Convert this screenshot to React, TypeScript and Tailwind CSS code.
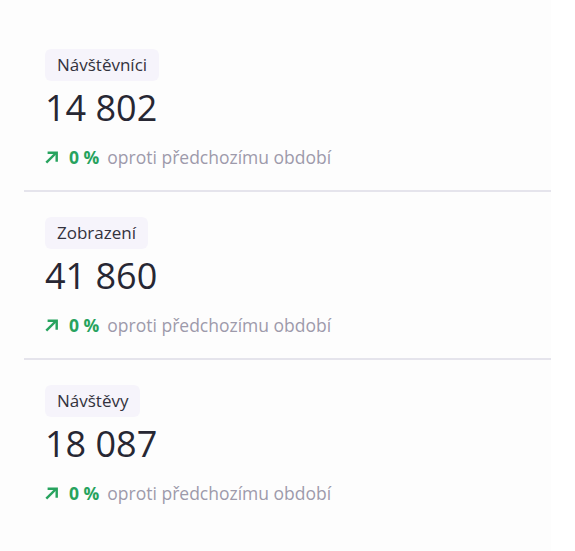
import type { ReactElement } from "react";

interface Stat {
  label: string;
  value: string;
  change: string;
}

const STATS: Stat[] = [
  { label: "Návštěvníci", value: "14 802", change: "0 %" },
  { label: "Zobrazení", value: "41 860", change: "0 %" },
  { label: "Návštěvy", value: "18 087", change: "0 %" },
];

function ArrowUpRight(): ReactElement {
  return (
    <svg
      width="13"
      height="13"
      viewBox="4.5 4.5 15 15"
      fill="none"
      stroke="currentColor"
      strokeWidth={2.8}
      strokeLinecap="butt"
      strokeLinejoin="miter"
    >
      <path d="M6 18 17.5 6.5" />
      <path d="M7.5 6.5h10.5v10.5" />
    </svg>
  );
}

function StatBlock({ stat, first }: { stat: Stat; first: boolean }): ReactElement {
  return (
    <div
      className={
        first
          ? "pl-[21px] pt-[26px] pb-[21px]"
          : "border-t-2 border-[#e5e4ec] pl-[21px] pt-[25px] pb-[21px]"
      }
    >
      <div className="flex">
        <span className="rounded-md bg-[#f6f4fb] px-3 py-1 text-[17px] leading-6 text-[#33323d]">
          {stat.label}
        </span>
      </div>
      <div className="mt-[7px] text-[36px] leading-10 font-normal text-[#272733]">
        {stat.value}
      </div>
      <div className="mt-[17px] flex items-center text-[17.5px] leading-6">
        <span className="text-[#27a35e]">
          <ArrowUpRight />
        </span>
        <span className="ml-[11px] font-bold text-[#27a35e]">{stat.change}</span>
        <span className="ml-[8px] text-[#9d9aab]">oproti předchozímu období</span>
      </div>
    </div>
  );
}

export default function App(): ReactElement {
  return (
    <div
      className="min-h-[551px] w-[575px] bg-white"
      style={{ fontFamily: '"Open Sans", "Noto Sans", sans-serif' }}
    >
      <div className="w-[551px] bg-[#fdfdfd] pt-[23px] pl-6 pb-8">
        {STATS.map((s, i) => (
          <StatBlock key={s.label} stat={s} first={i === 0} />
        ))}
      </div>
    </div>
  );
}
